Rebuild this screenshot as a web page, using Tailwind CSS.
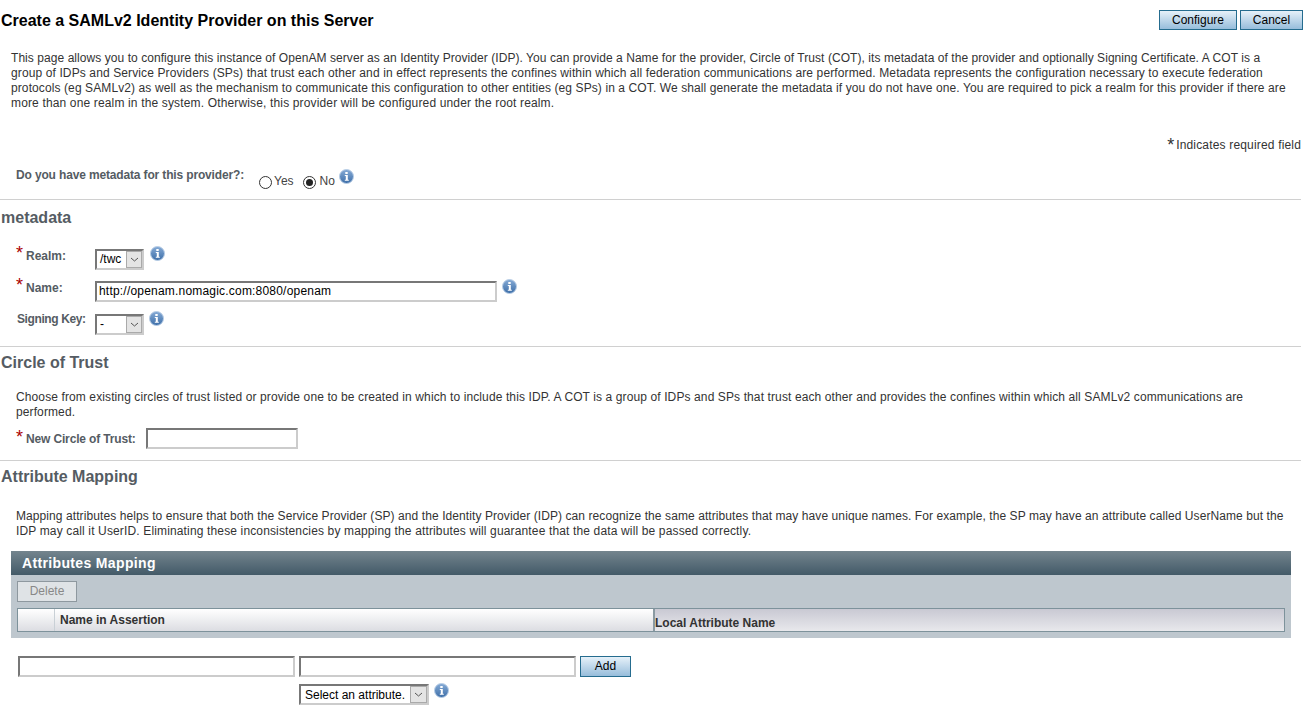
<!DOCTYPE html>
<html><head><meta charset="utf-8"><script src="https://cdn.jsdelivr.net/npm/@tailwindcss/browser@4"></script></head>
<body class="bg-white overflow-hidden font-['Liberation_Sans',Arial,sans-serif] text-[12px] leading-[15px] text-[#333]">
<svg class="absolute w-0 h-0" width="0" height="0"><defs>
  <linearGradient id="ig" x1="0" y1="0" x2="0" y2="1"><stop offset="0" stop-color="#86abd6"/><stop offset="1" stop-color="#3d6ea8"/></linearGradient>
  <symbol id="info" viewBox="0 0 15 15"><circle cx="7.5" cy="7.5" r="7" fill="url(#ig)" stroke="#b9cee6"/><rect x="6.3" y="3" width="2.400" height="2" fill="#fff"/><path d="M5.800 6h3v4.800h1v1h-4v-1h1v-3.800h-1z" fill="#fff"/></symbol>
</defs></svg>
<div class="w-[1306px] h-[710px] overflow-hidden">
  <header class="h-[40px] flex justify-between pl-[1px] pr-[3px] pt-[10px]">
    <h1 class="mt-[1px] text-[16px] leading-[20px] font-bold text-black">Create a SAMLv2 Identity Provider on this Server</h1>
    <div class="flex gap-[3px]">
      <button class="w-[78px] h-[20px] border border-[#256c8f] bg-gradient-to-b from-[#e6f1f9] to-[#97bddb] text-[12px] leading-[16px] text-black">Configure</button>
      <button class="w-[63px] h-[20px] border border-[#256c8f] bg-gradient-to-b from-[#e6f1f9] to-[#97bddb] text-[12px] leading-[16px] text-black">Cancel</button>
    </div>
  </header>
  <div class="ml-[11px] mt-[11px] w-[1290px] whitespace-nowrap">
    <p class="tracking-[0.06px]">This page allows you to configure this instance of OpenAM server as an Identity Provider (IDP). You can provide a Name for the provider, Circle of Trust (COT), its metadata of the provider and optionally Signing Certificate. A COT is a</p>
    <p class="tracking-[0.117px]">group of IDPs and Service Providers (SPs) that trust each other and in effect represents the confines within which all federation communications are performed. Metadata represents the configuration necessary to execute federation</p>
    <p class="tracking-[0.1px]">protocols (eg SAMLv2) as well as the mechanism to communicate this configuration to other entities (eg SPs) in a COT. We shall generate the metadata if you do not have one. You are required to pick a realm for this provider if there are</p>
    <p class="tracking-[0.15px]">more than one realm in the system. Otherwise, this provider will be configured under the root realm.</p>
  </div>
  <div class="mt-[24px] h-[18px] flex justify-end items-end pr-[5px]"><span class="text-[18px] leading-[14px] h-[15px] mr-[2px]">*</span><span class="tracking-[0.17px]">Indicates required field</span></div>
  <div class="h-[47px] border-b border-[#d0d0d0] w-[1301px] flex items-start pl-[16px]">
    <span class="font-bold text-[#555c63] w-[243px] mt-[15px] whitespace-nowrap tracking-[-0.15px]">Do you have metadata for this provider?:</span>
    <span class="mt-[21px] flex items-center">
      <span class="w-[13px] h-[13px] rounded-full border border-[#333] bg-white mt-[1px]"></span><span class="ml-[2px] text-[#444]">Yes</span>
      <span class="ml-[9px] w-[13px] h-[13px] rounded-full border border-[#333] bg-white mt-[1px] flex items-center justify-center"><span class="w-[7px] h-[7px] rounded-full bg-[#222]"></span></span><span class="ml-[4px] text-[#444]">No</span>
    </span>
    <svg class="ml-[4px] mt-[16px]" width="15" height="15"><use href="#info"/></svg>
  </div>
  <h2 class="ml-[1px] mt-[9px] text-[16px] leading-[18px] font-bold text-[#555c63]">metadata</h2>
  <div class="mt-[19px] pl-[16px] h-[32px] flex items-start">
    <span class="text-[#a00] text-[18px] leading-[15px] w-[10px]">*</span><span class="font-bold text-[#555c63] w-[69px] mt-[3px]">Realm:</span>
    <div class="mt-[3px] w-[49px] h-[21px] border-2 border-t-[#777] border-l-[#777] border-r-[#ccc] border-b-[#ccc] bg-white flex justify-between"><span class="pl-[3px] leading-[17px] text-black">/twc</span><span class="w-[16px] bg-[#e4e4e4] border border-[#aaa] flex items-center justify-center"><svg width="9" height="5" viewBox="0 0 9 5"><path d="M1 1l3.500 3 3.500-3" fill="none" stroke="#555"/></svg></span></div>
    <svg class="ml-[6px]" width="15" height="15"><use href="#info"/></svg>
  </div>
  <div class="pl-[16px] h-[33px] flex items-start">
    <span class="text-[#a00] text-[18px] leading-[15px] w-[10px]">*</span><span class="font-bold text-[#555c63] w-[69px] mt-[3px]">Name:</span>
    <div class="mt-[3px] w-[402px] h-[21px] border-2 border-t-[#777] border-l-[#777] border-r-[#ccc] border-b-[#ccc] pl-[2px] leading-[17px] text-black tracking-[0.2px]">http://openam.nomagic.com:8080/openam</div>
    <svg class="ml-[5px] mt-[1px]" width="15" height="15"><use href="#info"/></svg>
  </div>
  <div class="pl-[17px] h-[36px] w-[1301px] border-b border-[#d0d0d0] flex items-start">
    <span class="font-bold text-[#555c63] w-[78px] mt-[1px] tracking-[-0.4px]">Signing Key:</span>
    <div class="mt-[3px] w-[49px] h-[21px] border-2 border-t-[#777] border-l-[#777] border-r-[#ccc] border-b-[#ccc] bg-white flex justify-between"><span class="pl-[3px] leading-[17px] text-black">-</span><span class="w-[16px] bg-[#e4e4e4] border border-[#aaa] flex items-center justify-center"><svg width="9" height="5" viewBox="0 0 9 5"><path d="M1 1l3.500 3 3.500-3" fill="none" stroke="#555"/></svg></span></div>
    <svg class="ml-[5px]" width="15" height="15"><use href="#info"/></svg>
  </div>
  <h2 class="ml-[1px] mt-[7px] text-[16px] leading-[18px] font-bold text-[#555c63]">Circle of Trust</h2>
  <div class="ml-[16px] mt-[18px] w-[1280px] whitespace-nowrap">
    <p class="tracking-[0.11px]">Choose from existing circles of trust listed or provide one to be created in which to include this IDP. A COT is a group of IDPs and SPs that trust each other and provides the confines within which all SAMLv2 communications are</p>
    <p class="tracking-[0.11px]">performed.</p>
  </div>
  <div class="mt-[8px] pl-[16px] h-[33px] w-[1301px] border-b border-[#d0d0d0] flex items-start">
    <span class="text-[#a00] text-[18px] leading-[15px] w-[10px] mt-[2px]">*</span><span class="font-bold text-[#555c63] w-[120px] mt-[4px] whitespace-nowrap tracking-[-0.15px]">New Circle of Trust:</span>
    <div class="w-[152px] h-[21px] border-2 border-t-[#777] border-l-[#777] border-r-[#ccc] border-b-[#ccc]"></div>
  </div>
  <h2 class="ml-[1px] mt-[7px] text-[16px] leading-[18px] font-bold text-[#555c63]">Attribute Mapping</h2>
  <div class="ml-[16px] mt-[23px] w-[1285px] whitespace-nowrap">
    <p class="tracking-[0.083px]">Mapping attributes helps to ensure that both the Service Provider (SP) and the Identity Provider (IDP) can recognize the same attributes that may have unique names. For example, the SP may have an attribute called UserName but the</p>
    <p class="tracking-[0.144px]">IDP may call it UserID. Eliminating these inconsistencies by mapping the attributes will guarantee that the data will be passed correctly.</p>
  </div>
  <section class="ml-[11px] mt-[12px] w-[1280px] h-[87px] bg-[#bec7ce]">
    <div class="h-[24px] bg-gradient-to-b from-[#74858e] to-[#435a68] pl-[11px] text-[14px] leading-[24px] font-bold text-white tracking-[0.35px]">Attributes Mapping</div>
    <div class="pl-[6px] pt-[6px]"><div class="w-[60px] h-[21px] border border-[#8e989f] bg-[#dfe3e6] text-center leading-[19px] text-[#888]">Delete</div></div>
    <div class="ml-[6px] mt-[6px] w-[1268px] h-[24px] flex border border-[#7d929b] text-[12px] font-bold">
      <div class="w-[37px] border-r border-[#c9d0d6] bg-gradient-to-b from-white to-[#dcdde2]"></div>
      <div class="flex-1 border-r-2 border-[#8a9aa2] bg-gradient-to-b from-white to-[#dcdde2] pl-[5px] leading-[23px] text-[#333]">Name in Assertion</div>
      <div class="w-[629px] bg-gradient-to-b from-[#c9c9d3] to-[#e8e8ec] pt-[7px] leading-[15px] text-[#333]">Local Attribute Name</div>
    </div>
  </section>
  <div class="ml-[18px] mt-[18px] flex">
    <div class="w-[277px] h-[21px] border-2 border-t-[#777] border-l-[#777] border-r-[#ccc] border-b-[#ccc]"></div>
    <div class="ml-[4px] w-[277px] h-[21px] border-2 border-t-[#777] border-l-[#777] border-r-[#ccc] border-b-[#ccc]"></div>
    <button class="ml-[4px] w-[51px] h-[21px] border border-[#256c8f] bg-gradient-to-b from-[#e6f1f9] to-[#97bddb] text-[12px] leading-[17px] text-black">Add</button>
  </div>
  <div class="ml-[299px] mt-[7px] flex items-start">
    <div class="w-[130px] h-[21px] border-2 border-t-[#777] border-l-[#777] border-r-[#ccc] border-b-[#ccc] bg-white flex justify-between"><span class="pl-[4px] leading-[19px] text-black whitespace-nowrap">Select an attribute.</span><span class="w-[17px] bg-[#e4e4e4] border border-[#aaa] flex items-center justify-center"><svg width="9" height="5" viewBox="0 0 9 5"><path d="M1 1l3.500 3 3.500-3" fill="none" stroke="#555"/></svg></span></div>
    <svg class="ml-[5px] -mt-[1px]" width="15" height="15"><use href="#info"/></svg>
  </div>
</div>
</body></html>
